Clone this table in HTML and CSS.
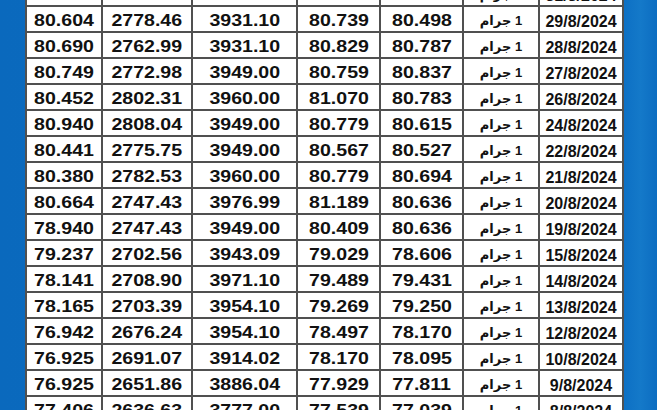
FILE: index.html
```html
<!DOCTYPE html>
<html lang="ar">
<head>
<meta charset="utf-8">
<title>أسعار</title>
<link rel="stylesheet" href="styles.css">
</head>
<body>
<div class="sheet">
  <div class="row"><div class="c n"><span>80.529</span></div><div class="c n"><span>2807.90</span></div><div class="c n"><span>3931.10</span></div><div class="c n"><span>80.783</span></div><div class="c n"><span>80.900</span></div><div class="c u"><span dir="rtl">1 جرام</span></div><div class="c d"><span>31/8/2024</span></div></div>
  <div class="row"><div class="c n"><span>80.604</span></div><div class="c n"><span>2778.46</span></div><div class="c n"><span>3931.10</span></div><div class="c n"><span>80.739</span></div><div class="c n"><span>80.498</span></div><div class="c u"><span dir="rtl">1 جرام</span></div><div class="c d"><span>29/8/2024</span></div></div>
  <div class="row"><div class="c n"><span>80.690</span></div><div class="c n"><span>2762.99</span></div><div class="c n"><span>3931.10</span></div><div class="c n"><span>80.829</span></div><div class="c n"><span>80.787</span></div><div class="c u"><span dir="rtl">1 جرام</span></div><div class="c d"><span>28/8/2024</span></div></div>
  <div class="row"><div class="c n"><span>80.749</span></div><div class="c n"><span>2772.98</span></div><div class="c n"><span>3949.00</span></div><div class="c n"><span>80.759</span></div><div class="c n"><span>80.837</span></div><div class="c u"><span dir="rtl">1 جرام</span></div><div class="c d"><span>27/8/2024</span></div></div>
  <div class="row"><div class="c n"><span>80.452</span></div><div class="c n"><span>2802.31</span></div><div class="c n"><span>3960.00</span></div><div class="c n"><span>81.070</span></div><div class="c n"><span>80.783</span></div><div class="c u"><span dir="rtl">1 جرام</span></div><div class="c d"><span>26/8/2024</span></div></div>
  <div class="row"><div class="c n"><span>80.940</span></div><div class="c n"><span>2808.04</span></div><div class="c n"><span>3949.00</span></div><div class="c n"><span>80.779</span></div><div class="c n"><span>80.615</span></div><div class="c u"><span dir="rtl">1 جرام</span></div><div class="c d"><span>24/8/2024</span></div></div>
  <div class="row"><div class="c n"><span>80.441</span></div><div class="c n"><span>2775.75</span></div><div class="c n"><span>3949.00</span></div><div class="c n"><span>80.567</span></div><div class="c n"><span>80.527</span></div><div class="c u"><span dir="rtl">1 جرام</span></div><div class="c d"><span>22/8/2024</span></div></div>
  <div class="row"><div class="c n"><span>80.380</span></div><div class="c n"><span>2782.53</span></div><div class="c n"><span>3960.00</span></div><div class="c n"><span>80.779</span></div><div class="c n"><span>80.694</span></div><div class="c u"><span dir="rtl">1 جرام</span></div><div class="c d"><span>21/8/2024</span></div></div>
  <div class="row"><div class="c n"><span>80.664</span></div><div class="c n"><span>2747.43</span></div><div class="c n"><span>3976.99</span></div><div class="c n"><span>81.189</span></div><div class="c n"><span>80.636</span></div><div class="c u"><span dir="rtl">1 جرام</span></div><div class="c d"><span>20/8/2024</span></div></div>
  <div class="row"><div class="c n"><span>78.940</span></div><div class="c n"><span>2747.43</span></div><div class="c n"><span>3949.00</span></div><div class="c n"><span>80.409</span></div><div class="c n"><span>80.636</span></div><div class="c u"><span dir="rtl">1 جرام</span></div><div class="c d"><span>19/8/2024</span></div></div>
  <div class="row"><div class="c n"><span>79.237</span></div><div class="c n"><span>2702.56</span></div><div class="c n"><span>3943.09</span></div><div class="c n"><span>79.029</span></div><div class="c n"><span>78.606</span></div><div class="c u"><span dir="rtl">1 جرام</span></div><div class="c d"><span>15/8/2024</span></div></div>
  <div class="row"><div class="c n"><span>78.141</span></div><div class="c n"><span>2708.90</span></div><div class="c n"><span>3971.10</span></div><div class="c n"><span>79.489</span></div><div class="c n"><span>79.431</span></div><div class="c u"><span dir="rtl">1 جرام</span></div><div class="c d"><span>14/8/2024</span></div></div>
  <div class="row"><div class="c n"><span>78.165</span></div><div class="c n"><span>2703.39</span></div><div class="c n"><span>3954.10</span></div><div class="c n"><span>79.269</span></div><div class="c n"><span>79.250</span></div><div class="c u"><span dir="rtl">1 جرام</span></div><div class="c d"><span>13/8/2024</span></div></div>
  <div class="row"><div class="c n"><span>76.942</span></div><div class="c n"><span>2676.24</span></div><div class="c n"><span>3954.10</span></div><div class="c n"><span>78.497</span></div><div class="c n"><span>78.170</span></div><div class="c u"><span dir="rtl">1 جرام</span></div><div class="c d"><span>12/8/2024</span></div></div>
  <div class="row"><div class="c n"><span>76.925</span></div><div class="c n"><span>2691.07</span></div><div class="c n"><span>3914.02</span></div><div class="c n"><span>78.170</span></div><div class="c n"><span>78.095</span></div><div class="c u"><span dir="rtl">1 جرام</span></div><div class="c d"><span>10/8/2024</span></div></div>
  <div class="row"><div class="c n"><span>76.925</span></div><div class="c n"><span>2651.86</span></div><div class="c n"><span>3886.04</span></div><div class="c n"><span>77.929</span></div><div class="c n"><span>77.811</span></div><div class="c u"><span dir="rtl">1 جرام</span></div><div class="c d"><span>9/8/2024</span></div></div>
  <div class="row"><div class="c n"><span>77.406</span></div><div class="c n"><span>2636.63</span></div><div class="c n"><span>3777.00</span></div><div class="c n"><span>77.539</span></div><div class="c n"><span>77.039</span></div><div class="c u"><span dir="rtl">1 جرام</span></div><div class="c d"><span>8/8/2024</span></div></div>
</div>
</body>
</html>
```

FILE: styles.css
```css
html, body {
  margin: 0;
  padding: 0;
}
body {
  width: 657px;
  height: 410px;
  overflow: hidden;
  background: linear-gradient(90deg, #0a69bd 0%, #0b6dc1 60%, #0d70c4 95%, #1479c9 97.5%, #0c6dc1 100%);
  font-family: "Liberation Sans", Arial, sans-serif;
  color: #111;
}
.sheet {
  margin: -21px 0 0 25px;
  width: max-content;
  display: grid;
  gap: 2px;
  padding: 2px;
  background: #505050;
}
.row {
  display: grid;
  grid-template-columns: 74px 88px 103px 81px 81px 74px 82px;
  grid-auto-rows: 24px;
  gap: 2px;
}
.c {
  background: #fff;
  display: flex;
  align-items: center;
  justify-content: center;
  box-sizing: border-box;
  overflow: hidden;
  white-space: nowrap;
}
.n {
  padding-top: 4px;
  font-size: 17px;
  font-weight: bold;
  line-height: 20px;
}
.n span {
  display: inline-block;
  transform: scaleX(1.15);
}
.u {
  padding-top: 4px;
  font-family: "Liberation Sans", "DejaVu Sans", sans-serif;
  font-size: 13px;
  font-weight: bold;
  line-height: 18px;
}
.d {
  padding-top: 6px;
  font-size: 16px;
  font-weight: bold;
  line-height: 18px;
}
```
